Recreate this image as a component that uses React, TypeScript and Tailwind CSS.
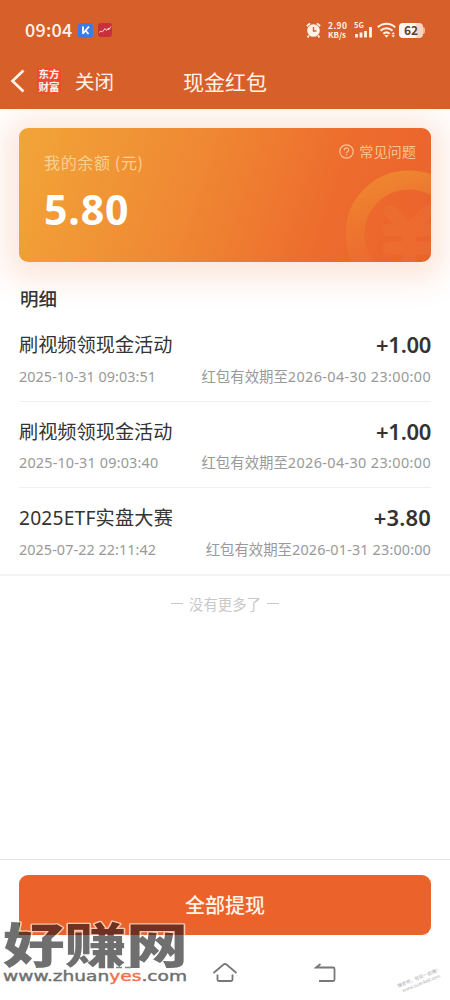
import * as React from 'react';

interface RecordItem {
  readonly title: string;
  readonly titleClass?: string;
  readonly time: string;
  readonly timeClass: string;
  readonly amount: string;
  readonly amountClass: string;
  readonly expiry: string;
  readonly expiryClass: string;
}

const RECORDS: readonly RecordItem[] = [
  {
    title: '刷视频领现金活动',
    time: '2025-10-31 09:03:51',
    timeClass: 'tracking-[0.06px]',
    amount: '+1.00',
    amountClass: 'tracking-[-0.3px]',
    expiry: '2026-04-30 23:00:00',
    expiryClass: 'tracking-[0.38px]',
  },
  {
    title: '刷视频领现金活动',
    time: '2025-10-31 09:03:40',
    timeClass: 'tracking-[0.18px]',
    amount: '+1.00',
    amountClass: 'tracking-[-0.3px]',
    expiry: '2026-04-30 23:00:00',
    expiryClass: 'tracking-[0.38px]',
  },
  {
    title: '2025ETF实盘大赛',
    titleClass: 'tracking-[0.2px]',
    time: '2025-07-22 22:11:42',
    timeClass: 'tracking-[0.06px]',
    amount: '+3.80',
    amountClass: 'tracking-[0.15px]',
    expiry: '2026-01-31 23:00:00',
    expiryClass: 'tracking-[0.16px]',
  },
];

function StatusBar(): React.JSX.Element {
  return (
    <div className="flex h-[60px] items-center px-[25px]">
      <span className="pb-[2px] text-[18px] leading-none font-medium tracking-[0.2px]">
        09:04
      </span>
      <svg className="ml-[6px] size-[15px]" viewBox="0 0 15 15">
        <rect width="15" height="15" rx="3.5" fill="#3f7be0" />
        <path
          d="M5 3.500v7.500M11 3.500 5 10.500M7.500 7.500l3 3.500"
          fill="none"
          stroke="#fff"
          strokeWidth="1.8"
        />
      </svg>
      <svg className="ml-[5px] size-[14px]" viewBox="0 0 14 14">
        <rect width="14" height="14" rx="3" fill="#c7303c" />
        <path
          d="M1 9.500 3 8l1.500.800L7 5.500l1.500 2 2-2.500v2l2.500-3.500"
          fill="none"
          stroke="#fbd5cd"
          strokeWidth="1"
        />
      </svg>

      <div className="ml-auto flex items-center">
        <svg className="h-[16px] w-[15px]" viewBox="0 0 15 16">
          <circle cx="7.5" cy="8.5" r="6.3" fill="#fff3e8" />
          <path
            d="M.800 4.200 4 1.300M14.200 4.200 11 1.300M3 13.500l-1.500 1.800M12 13.500l1.500 1.800"
            stroke="#fff3e8"
            strokeWidth="1.8"
          />
          <path
            d="M7.500 5v4h3"
            fill="none"
            stroke="#d75f2a"
            strokeWidth="1.4"
          />
        </svg>
        <div className="ml-[7px] w-[20px] text-[8.5px] leading-[9px] font-bold whitespace-nowrap">
          <div className="tracking-[0.4px]">2.90</div>
          <div className="text-[8px]">KB/s</div>
        </div>
        <div className="ml-[6px] flex h-[18px] w-[19px] flex-col">
          <span className="text-[7.5px] leading-[7px] font-bold">5G</span>
          <svg className="-mt-[3px] h-[13px] w-[19px]" viewBox="0 0 19 13">
            <path
              d="M2.500 12.500V9M7 12.500V7.500M11.500 12.500V6M16.500 12.500V2"
              stroke="#fff3e8"
              strokeWidth="2.8"
            />
          </svg>
        </div>
        <svg className="ml-[4px] h-[16px] w-[19px]" viewBox="0 0 19 16">
          <path
            d="M.800 5.200c5-4.700 12.400-4.700 17.400 0M3.500 8.700c3.500-3.200 8.500-3.200 12 0M6.300 11.800c2-1.800 4.400-1.800 6.400 0"
            fill="none"
            stroke="#fff3e8"
            strokeWidth="2"
          />
          <path
            d="M7.300 13h4.400l-2.200 2.700zM14.500 12.300l1.700-2.300 1.700 2.300zM14.500 13.300l1.700 2.300 1.700-2.300z"
            fill="#fff3e8"
          />
        </svg>
        <div className="ml-[3px] flex h-[15px] w-[24px] items-center justify-center rounded-[4px] bg-linear-to-r from-[#fffaf5] from-65% to-[#f7d5c4] to-75% pb-px text-[12px] leading-none font-bold text-[#59423a]">
          62
        </div>
        <div className="h-[7px] w-[2px] rounded-r-full bg-[#f0b69c]" />
      </div>
    </div>
  );
}

function TitleBar(): React.JSX.Element {
  return (
    <div className="grid h-[49px] grid-cols-[1fr_auto_1fr] items-center pb-[7px]">
      <div className="flex items-center pl-[10px]">
        <svg className="h-[24px] w-[16px]" viewBox="0 0 16 24">
          <path
            d="M13.500 1.500 2.500 12l11 10.500"
            fill="none"
            stroke="#fff3e8"
            strokeWidth="2.7"
          />
        </svg>
        <div className="ml-[11px] flex h-[26px] w-[24px] flex-col items-center justify-center rounded-[4px] bg-[#f04a2d] pb-px text-[10.5px] leading-[12.5px] font-bold">
          <span>东方</span>
          <span>财富</span>
        </div>
        <span className="ml-[14px] text-[19.5px] leading-none">关闭</span>
      </div>
      <h1 className="text-[21px] leading-none font-normal">现金红包</h1>
      <span />
    </div>
  );
}

function BalanceCard(): React.JSX.Element {
  return (
    <section className="relative flex h-[134px] justify-between overflow-hidden rounded-[9px] bg-[linear-gradient(108deg,#f2a538_0%,#ef8733_43%,#ed6c2d_74%,#eb622c_100%)]">
      <svg
        className="absolute right-0 bottom-0 h-[92px] w-[86px]"
        viewBox="0 0 86 92"
      >
        <defs>
          <linearGradient id="coin" x1="0.1" y1="0" x2="0.35" y2="0.9">
            <stop offset="0" stopColor="#f09a31" stopOpacity="0.6" />
            <stop offset="1" stopColor="#ee7834" stopOpacity="0.05" />
          </linearGradient>
        </defs>
        <circle
          cx="64"
          cy="64"
          r="54"
          fill="none"
          stroke="url(#coin)"
          strokeWidth="19"
        />
        <path
          d="M45 41l19 20 19-20M44 60h46M44 78h46M64 62v34"
          fill="none"
          stroke="#f07c38"
          strokeWidth="13"
          strokeLinecap="round"
          opacity="0.3"
        />
      </svg>
      <div className="relative pl-[25px]">
        <div className="mt-[24px] text-[16px] leading-[20px] tracking-[0.65px] whitespace-nowrap text-[#fbd08f]">
          我的余额 (元)
        </div>
        <div className="mt-[14px] font-['Noto_Sans',sans-serif] text-[41px] leading-[46px] font-bold tracking-[0.9px] text-white">
          5.80
        </div>
      </div>
      <div className="relative mt-[14px] mr-[15px] flex h-[18px] items-center gap-[5px] text-[14.2px] leading-none text-[#fbc294]">
        <svg
          className="size-[15px]"
          viewBox="0 0 15 15"
          fill="none"
          stroke="#fbc294"
        >
          <circle cx="7.5" cy="7.5" r="6.7" strokeWidth="1.2" />
          <path
            d="M5.300 6.200c0-3 4.400-3 4.400-.300 0 1.600-2.200 1.600-2.200 3.400M7.500 10.300v1.300"
            strokeWidth="1.2"
          />
        </svg>
        常见问题
      </div>
    </section>
  );
}

function RecordRow({record}: {readonly record: RecordItem}): React.JSX.Element {
  return (
    <li className="flex h-[86.5px] flex-col border-b border-[#f0f0f0] pt-[15px] last:h-[85.5px] last:border-b-0">
      <div className="flex h-[30px] items-center justify-between font-['Noto_Sans','Noto_Sans_CJK_SC',sans-serif] text-[#333]">
        <span className={`text-[19.2px] leading-none ${record.titleClass ?? ''}`}>
          {record.title}
        </span>
        <span
          className={`pb-[2px] text-[22px] leading-none font-semibold ${record.amountClass}`}
        >
          {record.amount}
        </span>
      </div>
      <div className="mt-[8px] flex h-[18px] items-center justify-between font-['Noto_Sans','Noto_Sans_CJK_SC',sans-serif] text-[14.4px] leading-none whitespace-nowrap text-[#999]">
        <span className={record.timeClass}>{record.time}</span>
        <span>
          红包有效期至<span className={record.expiryClass}>{record.expiry}</span>
        </span>
      </div>
    </li>
  );
}

function SiteLogo(): React.JSX.Element {
  return (
    <svg
      className="absolute top-[905px] left-0 h-[90px] w-[196px] font-['Noto_Sans_CJK_SC',sans-serif]"
      viewBox="0 0 196 90"
    >
      <defs>
        {/* the letters darken where they cross the button */}
        <pattern id="ink" patternUnits="userSpaceOnUse" width="196" height="90">
          <rect width="196" height="90" fill="#6f6f6f" />
          <rect x="19" width="177" height="30" fill="#6f3120" />
        </pattern>
        <pattern id="halo" patternUnits="userSpaceOnUse" width="196" height="90">
          <rect width="196" height="90" fill="#fff" />
          <rect x="19" width="177" height="30" fill="#fbc7ad" />
        </pattern>
      </defs>
      <text
        x="3"
        y="58"
        textLength="185"
        lengthAdjust="spacingAndGlyphs"
        fontSize="48"
        fontWeight="900"
        fill="url(#ink)"
        stroke="url(#halo)"
        strokeWidth="2.5"
        strokeLinejoin="round"
        paintOrder="stroke"
      >
        好赚网
      </text>
      <path d="M116 62.500h6M125 62.500h6" stroke="#7d8a7d" strokeWidth="1.5" />
      <text
        x="3"
        y="76"
        textLength="184"
        lengthAdjust="spacingAndGlyphs"
        className="font-['DejaVu_Sans',sans-serif]"
        fontSize="13.5"
        fill="#707070"
        stroke="#707070"
        strokeWidth="0.4"
      >
        www.zhuan
        <tspan fill="#f4704c" stroke="#f4704c">
          yes
        </tspan>
        .com
      </text>
    </svg>
  );
}

function CornerStamp(): React.JSX.Element {
  return (
    <div className="absolute top-[974px] left-[397px] flex w-[46px] -rotate-[22deg] flex-col items-center text-[4.6px] leading-[6px] whitespace-nowrap text-[#b0b0b0]">
      <span>赚客吧，有奖一起赚！</span>
      <span>www.zuanke8.com</span>
    </div>
  );
}

function NavigationBar(): React.JSX.Element {
  return (
    <nav className="flex h-[65px] items-center pt-[10px]">
      <svg className="ml-[212px] h-[21px] w-[26px]" viewBox="0 0 26 21">
        <path
          d="M1.500 11 11.500 2.500q1.500-1 3 0L24.500 11M5.500 12.500v5q0 1.500 1.500 1.500h12q1.500 0 1.500-1.500v-5"
          fill="none"
          stroke="#777"
          strokeWidth="1.8"
        />
      </svg>
      <svg className="ml-[76px] h-[20px] w-[22px]" viewBox="0 0 22 20">
        <path
          d="M6.500 1 2 4.500h17q1.500 0 1.500 1.500v10.500q0 1.500-1.500 1.500H5"
          fill="none"
          stroke="#777"
          strokeWidth="1.8"
        />
      </svg>
    </nav>
  );
}

export default function App(): React.JSX.Element {
  return (
    <div className="relative flex h-[1000px] w-[450px] flex-col overflow-hidden bg-white font-['Noto_Sans_CJK_SC',sans-serif]">
      <header className="h-[109px] bg-[#d75f2a] text-[#fff3e8]">
        <StatusBar />
        <TitleBar />
      </header>

      <main className="flex-1 overflow-hidden">
        <div className="px-[19px] pt-[19px]">
          <div className="rounded-[9px] shadow-[0_4px_30px_14px_rgba(235,110,50,0.17)]">
            <BalanceCard />
          </div>
        </div>
        <h2 className="px-[20px] pt-[24px] text-[18.5px] leading-[24px] font-medium text-[#333]">
          明细
        </h2>
        <ul className="px-[19px] pt-[5px]">
          {RECORDS.map((record, index) => (
            <RecordRow key={index} record={record} />
          ))}
        </ul>
        <div className="flex items-center justify-center gap-[6px] border-t-2 border-[#f3f3f3] pt-[19px] text-[14.4px] leading-[18px] text-[#c8c8c8]">
          <span className="h-px w-[12px] bg-[#c8c8c8]" />
          没有更多了
          <span className="h-px w-[12px] bg-[#c8c8c8]" />
        </div>
      </main>

      <footer className="h-[141px] border-t border-[#e2e2e2] px-[19px] pt-[15px]">
        <button className="h-[60px] w-full rounded-[9px] bg-[#eb622b] pb-px text-[20px] leading-none font-medium text-[#fff3e8]">
          全部提现
        </button>
        <div className="-mx-[19px]">
          <NavigationBar />
        </div>
      </footer>
      <SiteLogo />
      <CornerStamp />
    </div>
  );
}
